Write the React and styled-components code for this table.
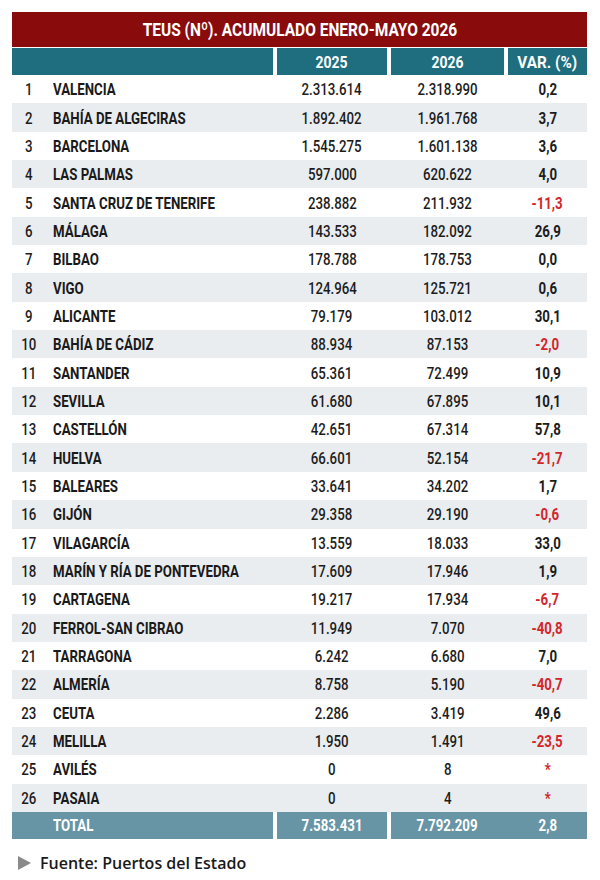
import React from 'react';
import styled, { createGlobalStyle } from 'styled-components';

const Global = createGlobalStyle`
  html, body { margin: 0; padding: 0; background: #fff; }
  body { font-family: Roboto, "Liberation Sans", sans-serif; color: #1c1c1c; }
`;

const data = [
  [1, 'VALENCIA', '2.313.614', '2.318.990', '0,2'],
  [2, 'BAHÍA DE ALGECIRAS', '1.892.402', '1.961.768', '3,7'],
  [3, 'BARCELONA', '1.545.275', '1.601.138', '3,6'],
  [4, 'LAS PALMAS', '597.000', '620.622', '4,0'],
  [5, 'SANTA CRUZ DE TENERIFE', '238.882', '211.932', '-11,3'],
  [6, 'MÁLAGA', '143.533', '182.092', '26,9'],
  [7, 'BILBAO', '178.788', '178.753', '0,0'],
  [8, 'VIGO', '124.964', '125.721', '0,6'],
  [9, 'ALICANTE', '79.179', '103.012', '30,1'],
  [10, 'BAHÍA DE CÁDIZ', '88.934', '87.153', '-2,0'],
  [11, 'SANTANDER', '65.361', '72.499', '10,9'],
  [12, 'SEVILLA', '61.680', '67.895', '10,1'],
  [13, 'CASTELLÓN', '42.651', '67.314', '57,8'],
  [14, 'HUELVA', '66.601', '52.154', '-21,7'],
  [15, 'BALEARES', '33.641', '34.202', '1,7'],
  [16, 'GIJÓN', '29.358', '29.190', '-0,6'],
  [17, 'VILAGARCÍA', '13.559', '18.033', '33,0'],
  [18, 'MARÍN Y RÍA DE PONTEVEDRA', '17.609', '17.946', '1,9'],
  [19, 'CARTAGENA', '19.217', '17.934', '-6,7'],
  [20, 'FERROL-SAN CIBRAO', '11.949', '7.070', '-40,8'],
  [21, 'TARRAGONA', '6.242', '6.680', '7,0'],
  [22, 'ALMERÍA', '8.758', '5.190', '-40,7'],
  [23, 'CEUTA', '2.286', '3.419', '49,6'],
  [24, 'MELILLA', '1.950', '1.491', '-23,5'],
  [25, 'AVILÉS', '0', '8', '*'],
  [26, 'PASAIA', '0', '4', '*'],
];

const COLS = '261px 110px 113px 79px';

const Page = styled.div`
  width: 600px;
  box-sizing: border-box;
  padding: 12px 13px 0 12px;
`;

const Title = styled.div`
  height: 35px;
  background: #8a0b0b;
  color: #fff;
  display: flex;
  align-items: center;
  justify-content: center;
  font-size: 19px;
  font-weight: 700;
`;

const Squeeze = styled.span`
  display: inline-block;
  white-space: nowrap;
  transform: scaleX(${(p) => p.$s ?? 0.78});
  transform-origin: ${(p) => p.$o ?? 'center'};
`;

const HeaderRow = styled.div`
  margin-top: 1px;
  display: grid;
  grid-template-columns: ${COLS};
  column-gap: 4px;
  height: 27px;
`;

const HeadCell = styled.div`
  background: #1f6e7f;
  color: #fff;
  font-size: 17px;
  font-weight: 700;
  display: flex;
  align-items: center;
  justify-content: center;
`;

const Row = styled.div`
  display: grid;
  grid-template-columns: ${COLS};
  column-gap: 4px;
  height: 28.35px;
  background: ${(p) => (p.$alt ? '#e9edf0' : '#fff')};
  font-size: 17px;
`;

const Label = styled.div`
  display: flex;
  align-items: center;
  min-width: 0;
`;

const Num = styled.div`
  flex: 0 0 34px;
  text-align: center;
  font-weight: 500;
`;

const Name = styled.div`
  flex: 1 1 auto;
  min-width: 0;
  margin-left: 7px;
  font-weight: 700;
  color: #1a1a1a;
`;

const Value = styled.div`
  display: flex;
  align-items: center;
  justify-content: center;
  font-weight: ${(p) => (p.$bold ? 700 : 500)};
  color: ${(p) => (p.$neg ? '#d3262b' : '#1c1c1c')};
`;

const TotalRow = styled.div`
  display: grid;
  grid-template-columns: 261px 110px 1fr;
  column-gap: 4px;
  height: 27px;
  color: #fff;
  font-size: 17px;
  font-weight: 700;
`;

const TotalCell = styled.div`
  background: #6895a5;
  display: flex;
  align-items: center;
  justify-content: ${(p) => (p.$left ? 'flex-start' : 'center')};
  padding-left: ${(p) => (p.$left ? '41px' : '0')};
`;

const TotalPair = styled.div`
  background: #6895a5;
  display: grid;
  grid-template-columns: 113px 79px;
  column-gap: 4px;
`;

const TotalValue = styled.div`
  display: flex;
  align-items: center;
  justify-content: center;
  color: #fff;
  font-weight: 700;
`;

const Footer = styled.div`
  margin-top: 12px;
  height: 24px;
  display: flex;
  align-items: center;
  gap: 9px;
  padding-left: 6px;
  font-family: "Open Sans", "Noto Sans", sans-serif;
  font-size: 16px;
  font-weight: 600;
  color: #1a1a1a;
`;

const Arrow = () => (
  <svg width="13" height="14" viewBox="0 0 13 14" aria-hidden="true">
    <polygon points="0,0 13,7 0,14" fill="#8a8a8a" />
  </svg>
);

export default function App() {
  return (
    <>
      <Global />
      <Page>
        <Title>
          <Squeeze $s={0.815}>TEUS (Nº). ACUMULADO ENERO-MAYO 2026</Squeeze>
        </Title>
        <HeaderRow>
          <HeadCell />
          <HeadCell><Squeeze $s={0.82}>2025</Squeeze></HeadCell>
          <HeadCell><Squeeze $s={0.82}>2026</Squeeze></HeadCell>
          <HeadCell><Squeeze $s={0.9}>VAR. (%)</Squeeze></HeadCell>
        </HeaderRow>
        {data.map(([n, name, a, b, v]) => {
          const neg = v.startsWith('-') || v === '*';
          return (
            <Row key={n} $alt={n % 2 === 0}>
              <Label>
                <Num><Squeeze>{n}</Squeeze></Num>
                <Name><Squeeze $o="left">{name}</Squeeze></Name>
              </Label>
              <Value><Squeeze>{a}</Squeeze></Value>
              <Value><Squeeze>{b}</Squeeze></Value>
              <Value $bold $neg={neg}><Squeeze>{v}</Squeeze></Value>
            </Row>
          );
        })}
        <TotalRow>
          <TotalCell $left><Squeeze $o="left">TOTAL</Squeeze></TotalCell>
          <TotalCell><Squeeze>7.583.431</Squeeze></TotalCell>
          <TotalPair>
            <TotalValue><Squeeze>7.792.209</Squeeze></TotalValue>
            <TotalValue><Squeeze>2,8</Squeeze></TotalValue>
          </TotalPair>
        </TotalRow>
        <Footer>
          <Arrow />
          <span>Fuente: Puertos del Estado</span>
        </Footer>
      </Page>
    </>
  );
}
